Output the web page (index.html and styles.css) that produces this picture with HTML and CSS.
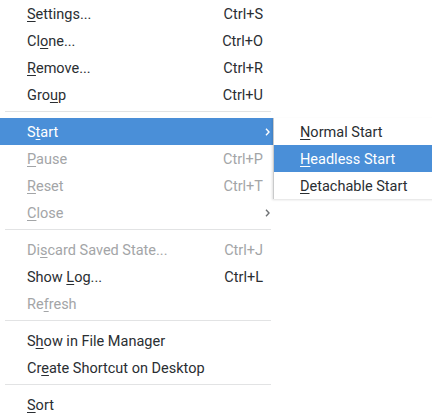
FILE: index.html
```html
<!DOCTYPE html>
<html>
<head>
<meta charset="utf-8">
<link rel="stylesheet" href="styles.css">
</head>
<body>
<div class="stage">
  <ul class="menu">
    <li class="item"><span class="label"><u>S</u>ettings...</span><span class="shortcut">Ctrl+S</span></li>
    <li class="item"><span class="label">Cl<u>o</u>ne...</span><span class="shortcut">Ctrl+O</span></li>
    <li class="item"><span class="label"><u>R</u>emove...</span><span class="shortcut">Ctrl+R</span></li>
    <li class="item"><span class="label">Gro<u>u</u>p</span><span class="shortcut">Ctrl+U</span></li>
    <li class="sep"></li>
    <li class="item active"><span class="label">S<u>t</u>art</span><svg class="chev" viewBox="0 0 5 8" width="5" height="8"><path d="M1 0.8 L4 4 L1 7.2" fill="none" stroke="currentColor" stroke-width="1.4"/></svg></li>
    <li class="item disabled"><span class="label"><u>P</u>ause</span><span class="shortcut">Ctrl+P</span></li>
    <li class="item disabled"><span class="label"><u>R</u>eset</span><span class="shortcut">Ctrl+T</span></li>
    <li class="item disabled"><span class="label"><u>C</u>lose</span><svg class="chev dark" viewBox="0 0 5 8" width="5" height="8"><path d="M1 0.8 L4 4 L1 7.2" fill="none" stroke="currentColor" stroke-width="1.4"/></svg></li>
    <li class="sep"></li>
    <li class="item disabled"><span class="label">Di<u>s</u>card Saved State...</span><span class="shortcut">Ctrl+J</span></li>
    <li class="item"><span class="label">Show <u>L</u>og...</span><span class="shortcut">Ctrl+L</span></li>
    <li class="item disabled"><span class="label">Re<u>f</u>resh</span></li>
    <li class="sep"></li>
    <li class="item"><span class="label">S<u>h</u>ow in File Manager</span></li>
    <li class="item"><span class="label">Cr<u>e</u>ate Shortcut on Desktop</span></li>
    <li class="sep"></li>
    <li class="item"><span class="label"><u>S</u>ort</span></li>
  </ul>
  <ul class="submenu">
    <li class="subitem"><u>N</u>ormal Start</li>
    <li class="subitem active"><u>H</u>eadless Start</li>
    <li class="subitem"><u>D</u>etachable Start</li>
  </ul>
</div>
</body>
</html>
```
FILE: styles.css
```css
html, body {
  margin: 0;
  padding: 0;
  background: #ffffff;
}
body {
  font-family: Roboto, "Noto Sans", sans-serif;
  font-size: 14.5px;
  color: #2a2e32;
}
.stage {
  position: relative;
  width: 432px;
  height: 418px;
  overflow: hidden;
}
ul {
  list-style: none;
  margin: 0;
  padding: 0;
}
.menu {
  width: 273px;
  display: flex;
  flex-direction: column;
}
.item {
  box-sizing: border-box;
  height: 27px;
  display: flex;
  align-items: center;
  padding: 2px 10px 0 27px;
  line-height: 25px;
}
.label {
  flex: 1;
  white-space: nowrap;
}
.shortcut {
  white-space: nowrap;
}
u {
  text-decoration-thickness: 1px;
  text-underline-offset: 2px;
}
.item.active {
  background: #4a8fd8;
  color: #ffffff;
}
.item.disabled {
  color: #a3a5a7;
}
.chev {
  margin-right: -7px;
  margin-top: -2px;
  color: #ffffff;
}
.chev.dark {
  color: #6f7275;
}
.sep {
  height: 10px;
  box-sizing: border-box;
  padding-top: 3px;
  margin: 0 2px 0 5px;
}
.sep::before {
  content: "";
  display: block;
  height: 1px;
  background: #e2e3e4;
}
.submenu {
  position: absolute;
  left: 273px;
  top: 118px;
  width: 170px;
  background: #ffffff;
  border-left: 1px solid #c9cacb;
  box-shadow: -1px 1px 2px rgba(0, 0, 0, 0.12);
}
.subitem {
  box-sizing: border-box;
  height: 27px;
  line-height: 25px;
  padding: 2px 0 0 26px;
  white-space: nowrap;
}
.subitem.active {
  background: #4a8fd8;
  color: #ffffff;
}
```
